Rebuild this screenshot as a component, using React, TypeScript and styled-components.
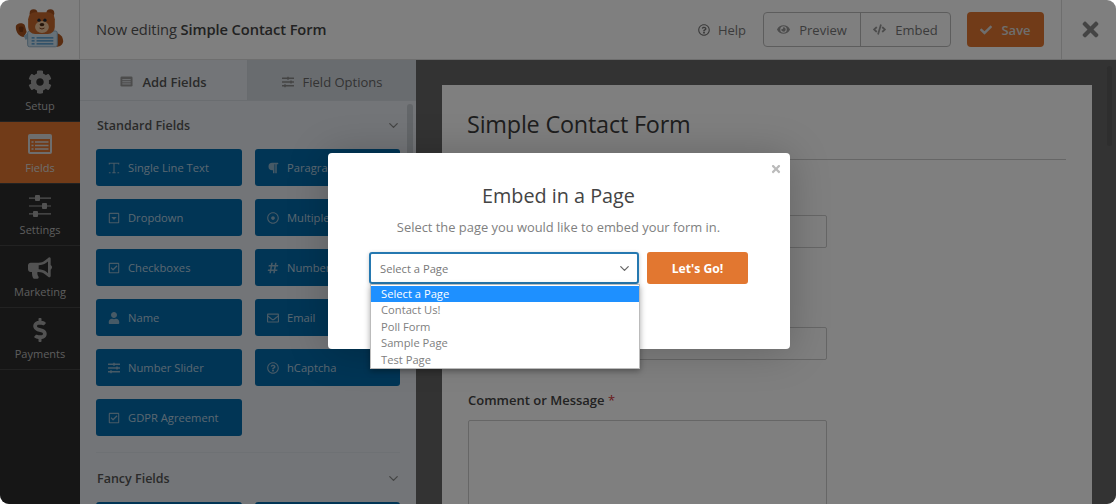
import React from "react";
import styled, { createGlobalStyle } from "styled-components";
import { ChevronDown } from "lucide-react";
import {
  FaBullhorn, FaCheck, FaCode, FaCog, FaDollarSign, FaEye, FaHashtag, FaParagraph, FaRegCaretSquareDown,
  FaRegCheckSquare, FaRegDotCircle, FaRegEnvelope, FaRegQuestionCircle, FaSlidersH, FaTimes, FaUser,
} from "react-icons/fa";

const Global = createGlobalStyle`
  html, body { margin: 0; padding: 0; background: #fff; }
  * { box-sizing: border-box; }
  body { font-family: "Open Sans", "Noto Sans", sans-serif; }
`;

const Frame = styled.div`
  position: relative; width: 1116px; height: 504px; overflow: hidden; border-radius: 9px;
  display: flex; flex-direction: column; background: #fff;
`;
const Header = styled.header`
  height: 60px; flex: none; display: flex; align-items: center; background: #fff; border-bottom: 1px solid #ddd;
`;
const LogoCell = styled.div`
  width: 80px; height: 60px; flex: none; border-right: 1px solid #ddd; display: flex;
`;
const HeaderTitle = styled.div`
  margin-left: 16px; margin-bottom: 2px; flex: 1; font-size: 14.7px; color: #555; letter-spacing: -0.1px;
  b { font-weight: 600; color: #444; }
`;
const HelpLink = styled.div`
  display: flex; align-items: center; gap: 8px; font-size: 13px; font-weight: 500; color: #777; margin-right: 17px;
  svg { font-size: 12px; }
`;
const BtnGroup = styled.div`
  width: 188px; height: 35px; display: flex; border: 1px solid #bbb; border-radius: 4px; margin-right: 16px;
`;
const GroupBtn = styled.div<{ $w: number; $line?: boolean }>`
  width: ${(p) => p.$w}px; display: flex; align-items: center; justify-content: center; gap: 9px;
  font-size: 13px; font-weight: 500; color: #777; ${(p) => (p.$line ? "border-left: 1px solid #bbb;" : "")}
  svg { font-size: 13px; color: #999; }
`;
const SaveBtn = styled.div`
  width: 77px; height: 35px; background: #e27730; border-radius: 4px; color: #ddd; font-size: 13px; font-weight: 600;
  display: flex; align-items: center; justify-content: center; gap: 9px; margin-right: 17px;
  svg { font-size: 12px; }
`;
const CloseCell = styled.div`
  width: 55px; height: 60px; border-left: 1px solid #ddd; display: flex; align-items: center; justify-content: center;
  color: #888; font-size: 23px; padding-left: 2px;
`;

const Body = styled.div` flex: 1; min-height: 0; display: flex; `;
const Sidebar = styled.nav` width: 80px; flex: none; background: #2d2d2d; `;
const SideItem = styled.div<{ $active?: boolean }>`
  height: 62px; display: flex; flex-direction: column; align-items: center; justify-content: flex-start; padding-top: 10px;
  border-bottom: 1px solid #444; background: ${(p) => (p.$active ? "#e27730" : "transparent")};
  color: ${(p) => (p.$active ? "#ddd" : "#bbb")}; font-size: 11px; line-height: 16px;
  svg { height: 24px; width: 24px; margin-bottom: 4px; color: ${(p) => (p.$active ? "#ddd" : "#a5a5a5")}; }
`;

const Panel = styled.section` width: 336px; flex: none; background: #e6ebf0; display: flex; flex-direction: column; overflow: hidden; position: relative; `;
const Tabs = styled.div` height: 41px; flex: none; display: flex; border-bottom: 1px solid #d5dbe1; `;
const Tab = styled.div<{ $active?: boolean }>`
  width: 168px; display: flex; align-items: center; justify-content: center; gap: 9px; padding-top: 3px;
  font-size: 13px; font-weight: ${(p) => (p.$active ? 600 : 500)};
  color: ${(p) => (p.$active ? "#555" : "#666")}; background: ${(p) => (p.$active ? "#e6ebf0" : "#d3d9df")};
  ${(p) => (p.$active ? "border-right: 1px solid #d0d6dc;" : "")}
  svg { font-size: 12px; color: #888; }
`;
const PanelBody = styled.div` padding: 15px 16px 0; `;
const SectionHead = styled.div`
  display: flex; justify-content: space-between; align-items: center; height: 19px; width: 304px;
  font-size: 12.5px; font-weight: 600; color: #555; padding-left: 1px;
  svg { width: 15px; height: 15px; color: #888; margin-right: -1px; }
`;
const FieldGrid = styled.div` display: grid; grid-template-columns: 146px 145px; gap: 13px; row-gap: 13px; margin-top: 14px; `;
const FieldBtn = styled.div`
  height: 37px; background: #036aab; border-radius: 3px; display: flex; align-items: center; padding-left: 12px; gap: 8px;
  color: #b5cfe0; font-size: 11.2px; font-weight: 500; white-space: nowrap;
  svg { width: 12px; height: 12px; flex: none; color: #8fb4cc; }
`;
const Divider = styled.div` width: 304px; height: 1px; background: #dde3e9; margin-top: 16px; margin-bottom: 16px; `;
const Scrollbar = styled.div`
  position: absolute; right: 3px; top: 44px; width: 6px; height: 130px; border-radius: 3px; background: #c7ccd2;
`;

const Canvas = styled.main` flex: 1; background: #666; padding: 25px 24px 0 26px; overflow: hidden; position: relative; `;
const Paper = styled.div` width: 650px; height: 500px; background: #fff; padding: 24px 26px 0 25px; `;
const FormTitle = styled.h1` margin: 0; font-size: 23.4px; line-height: 30px; font-weight: 500; color: #3c3c3c; letter-spacing: -0.2px; padding-bottom: 20px; border-bottom: 1px solid #ccc; `;
const FieldLabel = styled.label`
  display: block; font-size: 13px; line-height: 18px; font-weight: 600; color: #444;
  span { color: #d63638; font-weight: 400; }
`;
const FormField = styled.div<{ $top: number }>` margin-top: ${(p) => p.$top}px; margin-left: 1px; `;
const Input = styled.div<{ $h: number }>`
  width: 359px; height: ${(p) => p.$h}px; border: 1px solid #ccc; border-radius: 2px; margin-top: 11px;
`;
const PageScroll = styled.div` position: absolute; right: 4px; top: 6px; width: 5px; height: 80px; border-radius: 3px; background: #5c5c5c; `;

const Overlay = styled.div` position: absolute; inset: 0; background: rgba(0,0,0,.5); `;
const Modal = styled.div`
  position: absolute; left: 328px; top: 153px; width: 462px; height: 196px; background: #fff; border-radius: 4px;
  box-shadow: 0 2px 40px rgba(0,0,0,.22); padding: 29px 1px 0 0; display: flex; flex-direction: column; align-items: center;
`;
const ModalClose = styled.div` position: absolute; right: 8px; top: 10px; color: #bbb; font-size: 12px; line-height: 12px; `;
const ModalTitle = styled.h2` margin: 0; font-size: 19.8px; line-height: 28px; font-weight: 500; color: #444; `;
const ModalText = styled.p` margin: 8px 0 0; font-size: 12.9px; line-height: 18px; color: #808080; `;
const ModalRow = styled.div` display: flex; gap: 8px; margin-top: 16px; `;
const Select = styled.div`
  width: 270px; height: 32px; border: 2px solid #2578b0; border-radius: 3px; display: flex; align-items: center; justify-content: space-between;
  padding: 0 5px 0 9px; font-size: 11.2px; color: #777; box-shadow: 0 1px 4px rgba(0,0,0,.2);
  svg { width: 15px; height: 15px; color: #666; }
`;
const GoBtn = styled.div`
  width: 101px; height: 32px; background: #e27730; border-radius: 3px; color: #fff; font-size: 12.2px; font-weight: 700;
  display: flex; align-items: center; justify-content: center;
`;
const DropList = styled.ul`
  position: absolute; left: 42px; top: 131px; width: 270px; height: 85px; margin: 0; padding: 1px 0 0; list-style: none; background: #fff;
  border: 1px solid #bbb; box-shadow: 0 2px 6px rgba(0,0,0,.35);
`;
const DropItem = styled.li<{ $sel?: boolean }>`
  height: 16.4px; line-height: 16.4px; padding-left: 10px; font-size: 11.2px;
  color: ${(p) => (p.$sel ? "#fff" : "#808080")}; background: ${(p) => (p.$sel ? "#1e90ff" : "transparent")};
`;

const Bear = () => (
  <svg viewBox="0 0 80 60" width="80" height="60">
    <circle cx="34" cy="13" r="4" fill="#a8521f" />
    <circle cx="51" cy="13" r="4" fill="#a8521f" />
    <path d="M57 33c5 1 7 5 7 9-1 4-4 5-7 5z" fill="#b55a22" />
    <path d="M16 27c0-4 7-5 9-2l2 7-3 5c-4 0-8-4-8-10z" fill="#a8521f" />
    <path d="M19 28c1-2 4-2 5 0l-1 4h-3z" fill="#7e3a14" />
    <path d="M24 36l5-4v6l-3 2z" fill="#9fc0d6" />
    <rect x="28" y="31" width="30" height="16" rx="2" fill="#cfe3f0" stroke="#8fb2c9" strokeWidth="1" />
    <path d="M37 38h17M37 41h17M37 44h17" stroke="#3f8fc8" strokeWidth="1.4" />
    <path d="M32 38h3M32 41h3M32 44h3" stroke="#3f8fc8" strokeWidth="1.4" />
    <rect x="28.5" y="12" width="27" height="22" rx="7" fill="#c9692c" />
    <ellipse cx="42.5" cy="27" rx="7" ry="6" fill="#eec79e" />
    <circle cx="39.5" cy="20" r="1.7" fill="#1d2a38" />
    <circle cx="45.5" cy="20" r="1.7" fill="#1d2a38" />
    <ellipse cx="42.5" cy="24.5" rx="2.4" ry="1.6" fill="#4a2a16" />
    <path d="M40 28q2.5 2 5 0" stroke="#7a3a18" strokeWidth="1" fill="none" />
  </svg>
);
const FieldsIcon = () => (
  <svg viewBox="0 0 24 24">
    <rect x="0" y="2" width="24" height="20" rx="2" fill="currentColor" />
    <rect x="2" y="7" width="20" height="13" fill="#e27730" />
    <path d="M3.5 10h2M7 10h13.5M3.5 13.5h2M7 13.5h13.5M3.5 17h2M7 17h13.5" stroke="currentColor" strokeWidth="1.5" />
  </svg>
);
const SlidersIcon = () => (
  <svg viewBox="0 0 24 24" fill="currentColor">
    <path d="M1 3.5h22v1.2H1zM1 11.4h22v1.2H1zM1 19.3h22v1.2H1z" />
    <rect x="7" y="1" width="5" height="6" rx="1" /><rect x="14" y="9" width="5" height="6" rx="1" /><rect x="5" y="17" width="5" height="6" rx="1" />
  </svg>
);
const TextIcon = () => (
  <svg viewBox="0 0 14 14" fill="none" stroke="currentColor" strokeWidth="1.3">
    <path d="M1.5 3V1.5h11V3M7 1.5v11M5 12.5h4M1 12.5h2M11 12.5h2" />
  </svg>
);
const ListIcon = () => (
  <svg width="13" height="13" viewBox="0 0 14 14">
    <rect x=".5" y="1.5" width="13" height="11" rx="1.5" fill="#999" />
    <path d="M2.5 5h9M2.5 7.3h9M2.5 9.6h9" stroke="#e6ebf0" strokeWidth="1" />
  </svg>
);

const fields: [React.ReactNode, string][] = [
  [<TextIcon />, "Single Line Text"], [<FaParagraph />, "Paragraph Text"],
  [<FaRegCaretSquareDown />, "Dropdown"], [<FaRegDotCircle />, "Multiple Choice"],
  [<FaRegCheckSquare />, "Checkboxes"], [<FaHashtag />, "Numbers"],
  [<FaUser />, "Name"], [<FaRegEnvelope />, "Email"],
  [<FaSlidersH />, "Number Slider"], [<FaRegQuestionCircle />, "hCaptcha"],
  [<FaRegCheckSquare />, "GDPR Agreement"],
];

export default function App() {
  return (
    <>
      <Global />
      <Frame>
        <Header>
          <LogoCell><Bear /></LogoCell>
          <HeaderTitle>Now editing <b>Simple Contact Form</b></HeaderTitle>
          <HelpLink><FaRegQuestionCircle />Help</HelpLink>
          <BtnGroup>
            <GroupBtn $w={96}><FaEye />Preview</GroupBtn>
            <GroupBtn $w={90} $line><FaCode />Embed</GroupBtn>
          </BtnGroup>
          <SaveBtn><FaCheck />Save</SaveBtn>
          <CloseCell><FaTimes /></CloseCell>
        </Header>
        <Body>
          <Sidebar>
            <SideItem><FaCog />Setup</SideItem>
            <SideItem $active><FieldsIcon />Fields</SideItem>
            <SideItem><SlidersIcon />Settings</SideItem>
            <SideItem><FaBullhorn />Marketing</SideItem>
            <SideItem><FaDollarSign />Payments</SideItem>
          </Sidebar>
          <Panel>
            <Tabs>
              <Tab $active><ListIcon />Add Fields</Tab>
              <Tab><FaSlidersH />Field Options</Tab>
            </Tabs>
            <PanelBody>
              <SectionHead>Standard Fields<ChevronDown /></SectionHead>
              <FieldGrid>
                {fields.map(([icon, label]) => (
                  <FieldBtn key={label}>{icon}{label}</FieldBtn>
                ))}
              </FieldGrid>
              <Divider />
              <SectionHead>Fancy Fields<ChevronDown /></SectionHead>
              <FieldGrid>
                <FieldBtn />
                <FieldBtn />
              </FieldGrid>
            </PanelBody>
            <Scrollbar />
          </Panel>
          <Canvas>
            <Paper>
              <FormTitle>Simple Contact Form</FormTitle>
              <FormField $top={55}>
                <Input $h={33} />
              </FormField>
              <FormField $top={79}>
                <Input $h={33} />
              </FormField>
              <FormField $top={31}>
                <FieldLabel>Comment or Message <span>*</span></FieldLabel>
                <Input $h={120} />
              </FormField>
            </Paper>
            <PageScroll />
          </Canvas>
        </Body>
        <Overlay />
        <Modal>
          <ModalClose><FaTimes /></ModalClose>
          <ModalTitle>Embed in a Page</ModalTitle>
          <ModalText>Select the page you would like to embed your form in.</ModalText>
          <ModalRow>
            <Select>Select a Page<ChevronDown /></Select>
            <GoBtn>Let's Go!</GoBtn>
          </ModalRow>
          <DropList>
            <DropItem $sel>Select a Page</DropItem>
            <DropItem>Contact Us!</DropItem>
            <DropItem>Poll Form</DropItem>
            <DropItem>Sample Page</DropItem>
            <DropItem>Test Page</DropItem>
          </DropList>
        </Modal>
      </Frame>
    </>
  );
}
